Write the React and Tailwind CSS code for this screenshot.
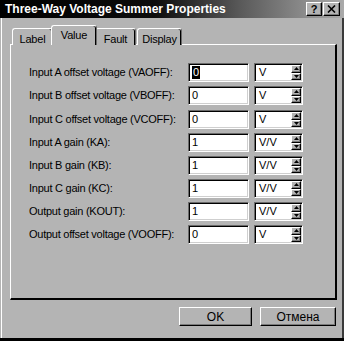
import React from "react";

const rows = [
  { label: "Input A offset voltage (VAOFF):", value: "0", unit: "V", selected: true },
  { label: "Input B offset voltage (VBOFF):", value: "0", unit: "V" },
  { label: "Input C offset voltage (VCOFF):", value: "0", unit: "V", extra: true },
  { label: "Input A gain (KA):", value: "1", unit: "V/V" },
  { label: "Input B gain (KB):", value: "1", unit: "V/V" },
  { label: "Input C gain (KC):", value: "1", unit: "V/V" },
  { label: "Output gain (KOUT):", value: "1", unit: "V/V" },
  { label: "Output offset voltage (VOOFF):", value: "0", unit: "V" },
];

const sunken =
  "border border-t-[#6a6a6a] border-l-[#6a6a6a] border-b-white border-r-white shadow-[inset_1px_1px_0_#000,inset_-1px_-1px_0_#cfcfcf]";
const raised =
  "border border-t-white border-l-white border-b-black border-r-black shadow-[inset_-1px_-1px_0_#7a7a7a]";

function Spin() {
  return (
    <div className="flex flex-col w-[10px] h-full">
      <div className={`${raised} flex-1 bg-[#b4b4b4] flex items-center justify-center`}>
        <svg width="5" height="3" viewBox="0 0 5 3">
          <path d="M2.5 0 L5 3 L0 3 Z" fill="#000" />
        </svg>
      </div>
      <div className={`${raised} flex-1 bg-[#b4b4b4] flex items-center justify-center`}>
        <svg width="5" height="3" viewBox="0 0 5 3">
          <path d="M0 0 L5 0 L2.5 3 Z" fill="#000" />
        </svg>
      </div>
    </div>
  );
}

function Row({ label, value, unit, selected, extra }) {
  return (
    <div className={`flex items-center h-[19px] ${extra ? "mt-[5px]" : "mt-[4px]"} first:mt-0`}>
      <span className="w-[159px] text-[11px] tracking-[-0.25px] text-black leading-none whitespace-nowrap">
        {label}
      </span>
      <div className={`${sunken} w-[61px] h-[19px] bg-white flex items-center pl-[3px] text-[11px] leading-none`}>
        {selected ? (
          <span className="bg-black text-white px-px h-[13px] flex items-center">{value}</span>
        ) : (
          <span>{value}</span>
        )}
      </div>
      <div className={`${sunken} ml-[5px] w-[49px] h-[19px] bg-white flex items-stretch p-px`}>
        <span className="flex-1 flex items-center pl-[3px] text-[11px] leading-none">{unit}</span>
        <Spin />
      </div>
    </div>
  );
}

function Tab({ children, active, className = "" }) {
  return (
    <div
      className={`relative flex items-start justify-center border-t border-l border-white rounded-t-[3px] shadow-[inset_-1px_0_0_#000] border-r border-r-[#6a6a6a] text-[11px] tracking-[-0.2px] leading-none whitespace-nowrap bg-[#b4b4b4] ${
        active ? "h-[20px] pt-[4px] -mx-[2px] z-10" : "h-[17px] mt-[3px] pt-[5px]"
      } ${className}`}
    >
      {children}
    </div>
  );
}

export default function App() {
  return (
    <div
      className="w-[344px] h-[341px] bg-[#b4b4b4] overflow-hidden flex flex-col text-black"
      style={{ fontFamily: '"Liberation Sans", Arial, sans-serif' }}
    >
      {/* title bar */}
      <div className="h-[18px] flex items-center justify-between pl-[5px] pr-[4px] bg-[linear-gradient(to_right,#000_0%,#0c0c0c_45%,#5a5a5a_70%,#aaaaaa_100%)]">
        <span className="text-white font-bold text-[12px] leading-none whitespace-nowrap">
          Three-Way Voltage Summer Properties
        </span>
        <div className="flex gap-px">
          <div className={`${raised} w-[16px] h-[14px] bg-[#b4b4b4] flex items-center justify-center text-[11px] font-bold leading-none`}>
            ?
          </div>
          <div className={`${raised} w-[17px] h-[14px] bg-[#b4b4b4] flex items-center justify-center`}>
            <svg width="9" height="8" viewBox="0 0 9 8">
              <path d="M1 0.5 L8 7.5 M8 0.5 L1 7.5" stroke="#000" strokeWidth="1.6" />
            </svg>
          </div>
        </div>
      </div>

      {/* body */}
      <div className="flex-1 flex flex-col ml-px border-l border-white border-r-2 border-r-[#3a3a3a]">
        {/* tabs */}
        <div className="flex pl-[10px] pt-[7px] h-[26px]">
          <Tab className="w-[41px]">Label</Tab>
          <Tab active className="w-[46px]">Value</Tab>
          <Tab className="w-[41px]">Fault</Tab>
          <Tab className="w-[45px] ml-px">Display</Tab>
        </div>

        {/* panel */}
        <div className="ml-[8px] w-[327px] h-[256px] border-t border-l border-white border-r-2 border-b-2 border-r-black border-b-black pl-[18px] pt-[18px] flex flex-col">
          {rows.map((r) => (
            <Row key={r.label} {...r} />
          ))}
        </div>

        {/* buttons */}
        <div className="flex justify-end gap-[8px] pr-[6px] mt-[7px]">
          <div className={`${raised} w-[73px] h-[19px] flex items-center justify-center text-[12px] leading-none`}>OK</div>
          <div className={`${raised} w-[76px] h-[19px] flex items-center justify-center text-[12px] leading-none`}>Отмена</div>
        </div>
        <div className="flex-1" />
      </div>
      <div className="h-[3px] bg-black" />
    </div>
  );
}
